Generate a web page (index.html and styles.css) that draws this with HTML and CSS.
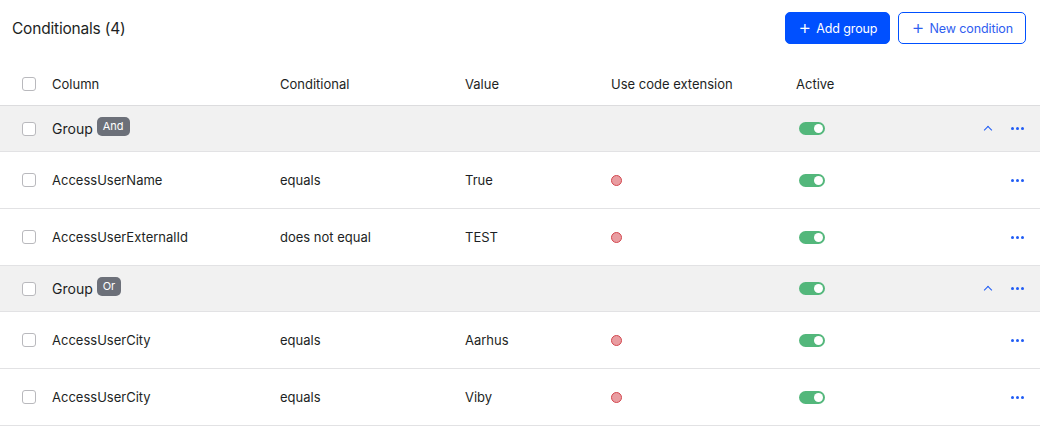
FILE: index.html
```html
<!DOCTYPE html>
<html lang="en">
<head>
    <meta charset="UTF-8">
    <title>Conditionals</title>
    <link rel="stylesheet" href="styles.css">
</head>
<body>
    <div class="toolbar">
        <h1>Conditionals (4)</h1>
        <div class="actions">
            <button class="btn primary"><span class="plus">+</span>Add group</button>
            <button class="btn outline"><span class="plus">+</span>New condition</button>
        </div>
    </div>

    <div class="table">
        <div class="row head">
            <span class="check"></span>
            <span>Column</span>
            <span>Conditional</span>
            <span>Value</span>
            <span>Use code extension</span>
            <span>Active</span>
            <span class="tools"></span>
        </div>

        <div class="row group">
            <span class="check"></span>
            <span class="group-name">Group <em class="badge">And</em></span>
            <span></span>
            <span></span>
            <span></span>
            <span><i class="toggle"></i></span>
            <span class="tools"><i class="chevron"></i><i class="more"><b></b><b></b><b></b></i></span>
        </div>
        <div class="row">
            <span class="check"></span>
            <span>AccessUserName</span>
            <span>equals</span>
            <span>True</span>
            <span><i class="dot"></i></span>
            <span><i class="toggle"></i></span>
            <span class="tools"><i class="more"><b></b><b></b><b></b></i></span>
        </div>
        <div class="row">
            <span class="check"></span>
            <span>AccessUserExternalId</span>
            <span>does not equal</span>
            <span>TEST</span>
            <span><i class="dot"></i></span>
            <span><i class="toggle"></i></span>
            <span class="tools"><i class="more"><b></b><b></b><b></b></i></span>
        </div>

        <div class="row group">
            <span class="check"></span>
            <span class="group-name">Group <em class="badge">Or</em></span>
            <span></span>
            <span></span>
            <span></span>
            <span><i class="toggle"></i></span>
            <span class="tools"><i class="chevron"></i><i class="more"><b></b><b></b><b></b></i></span>
        </div>
        <div class="row">
            <span class="check"></span>
            <span>AccessUserCity</span>
            <span>equals</span>
            <span>Aarhus</span>
            <span><i class="dot"></i></span>
            <span><i class="toggle"></i></span>
            <span class="tools"><i class="more"><b></b><b></b><b></b></i></span>
        </div>
        <div class="row">
            <span class="check"></span>
            <span>AccessUserCity</span>
            <span>equals</span>
            <span>Viby</span>
            <span><i class="dot"></i></span>
            <span><i class="toggle"></i></span>
            <span class="tools"><i class="more"><b></b><b></b><b></b></i></span>
        </div>
    </div>
</body>
</html>
```

FILE: styles.css
```css
body {
    font-family: Inter, "Noto Sans", sans-serif;
    color: #1d1f24;
    background-color: #fff;
    margin: 0;
    font-size: 13px;
}
.toolbar {
    display: flex;
    align-items: center;
    justify-content: space-between;
    padding: 12px 14px 0 12px;
    height: 32px;
}
.toolbar h1 {
    font-size: 15.5px;
    font-weight: 400;
    margin: 0;
    letter-spacing: -0.2px;
}
.actions {
    display: flex;
    gap: 8px;
}
.btn {
    font-family: inherit;
    font-size: 12.5px;
    height: 32px;
    border-radius: 5px;
    padding: 0 12px;
    display: flex;
    align-items: center;
    cursor: pointer;
    letter-spacing: -0.1px;
}
.btn .plus {
    font-size: 20px;
    font-weight: 300;
    margin-right: 5px;
    line-height: 1;
    position: relative;
    top: -1px;
}
.btn.primary {
    background-color: #0050ff;
    border: 1px solid #0050ff;
    color: #fff;
    padding: 0 12px;
}
.btn.outline {
    background-color: #fff;
    border: 1px solid #0050ff;
    color: #2f5ef0;
}
.table {
    margin-top: 18px;
}
.row {
    display: grid;
    grid-template-columns: 14px 244px 185px 146px 185px 1fr 60px;
    align-items: center;
    padding: 0 16px 0 22px;
    height: 56px;
    border-bottom: 1px solid #e2e2e4;
}
.row > span:nth-child(2) {
    padding-left: 16px;
}
.row.head {
    height: 43px;
    border-bottom: 1px solid #dcdcde;
}
.row.group {
    height: 45px;
    background-color: #f1f1f1;
}
.check {
    width: 12px;
    height: 12px;
    border: 1px solid #b9b9bd;
    border-radius: 3px;
    background-color: #fff;
}
.group-name {
    font-size: 14px;
}
.badge {
    font-style: normal;
    font-size: 11px;
    color: #fff;
    background-color: #6c7079;
    border-radius: 5px;
    padding: 2px 6px 3px;
    position: relative;
    top: -4px;
    margin-left: 0;
}
.dot {
    display: block;
    width: 9px;
    height: 9px;
    border-radius: 50%;
    background-color: #e99da1;
    border: 1px solid #d3474f;
}
.toggle {
    display: block;
    width: 26px;
    height: 13px;
    border-radius: 7px;
    background-color: #53b77b;
    position: relative;
    margin-left: 3px;
}
.toggle::after {
    content: "";
    position: absolute;
    right: 2px;
    top: 2px;
    width: 9px;
    height: 9px;
    border-radius: 50%;
    background-color: #fff;
}
.tools {
    display: flex;
    align-items: center;
    justify-content: flex-end;
    gap: 20px;
}
.chevron {
    width: 5px;
    height: 5px;
    border-left: 1.5px solid #1f5cf5;
    border-top: 1.5px solid #1f5cf5;
    transform: rotate(45deg);
    margin-top: 3px;
}
.more {
    display: flex;
    gap: 2px;
}
.more b {
    width: 3px;
    height: 3px;
    border-radius: 50%;
    background-color: #1f5cf5;
}
```
